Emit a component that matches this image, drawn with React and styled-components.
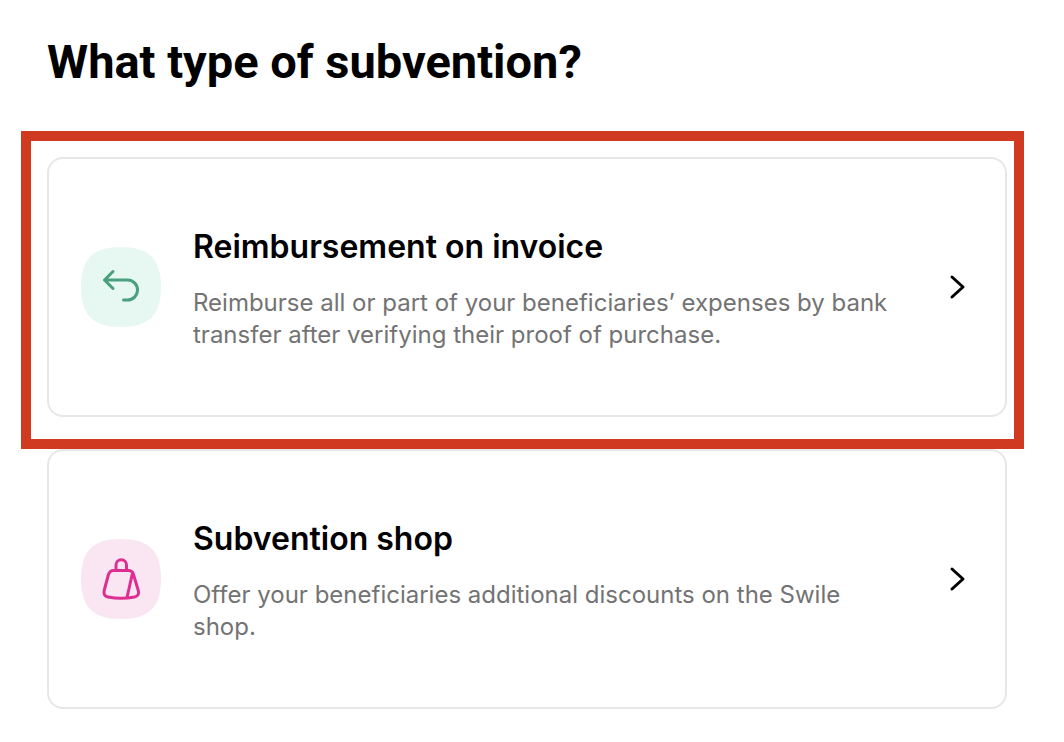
import React from "react";
import styled, { createGlobalStyle } from "styled-components";

const GlobalStyle = createGlobalStyle`
  * {
    box-sizing: border-box;
  }
  body {
    margin: 0;
    background-color: #ffffff;
    font-family: Inter, "Liberation Sans", sans-serif;
  }
`;
const Container = styled.main`
  padding: 32px 57px 32px 47px;
`;
const Title = styled.h1`
  margin: 0 0 65px;
  font-family: Roboto, "Liberation Sans", sans-serif;
  font-size: 47px;
  font-weight: 700;
  line-height: 60px;
  color: #000000;
`;
const List = styled.div`
  display: flex;
  flex-direction: column;
  gap: 32px;
`;
const Item = styled.div`
  position: relative;
`;
const Highlight = styled.div`
  position: absolute;
  top: -26px;
  right: -17px;
  bottom: -32px;
  left: -26px;
  border: 10px solid #d03a20;
  pointer-events: none;
`;
const Card = styled.button`
  display: flex;
  align-items: center;
  width: 100%;
  min-height: 260px;
  padding: 32px;
  border: 2px solid #e7e7e7;
  border-radius: 16px;
  background-color: #ffffff;
  color: #000000;
  font-family: inherit;
  text-align: left;
  cursor: pointer;
`;
const Icon = styled.svg`
  flex: none;
  width: 80px;
  height: 80px;
  fill: none;
  stroke: ${(props) => props.$color};
  stroke-width: 3;
  stroke-linecap: round;
  stroke-linejoin: round;
`;
const Badge = styled.path`
  fill: ${(props) => props.$fill};
  stroke: none;
`;
const Info = styled.span`
  flex: 1;
  display: flex;
  flex-direction: column;
  gap: 16px;
  margin: 0 48px 0 32px;
`;
const Name = styled.span`
  font-size: 32px;
  font-weight: 600;
  line-height: 48px;
`;
const Description = styled.span`
  font-size: 24px;
  font-weight: 400;
  line-height: 32px;
  color: #737373;
`;
const Chevron = styled.svg`
  flex: none;
  width: 32px;
  height: 32px;
  fill: none;
  stroke: #000000;
  stroke-width: 3;
  stroke-linecap: round;
  stroke-linejoin: round;
`;

const subventions = [
  {
    id: "invoice",
    title: "Reimbursement on invoice",
    desc: "Reimburse all or part of your beneficiaries’ expenses by bank transfer after verifying their proof of purchase.",
    color: "#4a9f7f",
    fill: "#e7f8f2",
    shape: <path d="M32 24.5L23.5 33L32 41.5M23.5 33H46.5A10 10 0 0 1 46.5 53H42.5" />,
    highlighted: true,
  },
  {
    id: "shop",
    title: "Subvention shop",
    desc: "Offer your beneficiaries additional discounts on the Swile shop.",
    color: "#dd2f91",
    fill: "#f9e6f2",
    shape: (
      <>
        <path d="M35 31V26A5.25 5.25 0 0 1 45.5 26V31" />
        <path d="M32.5 31.5H47.5C50 31.5 51.5 32.5 52.3 35L57.3 51.5C58.3 55 57 57.3 53.5 58C45 59.5 35 59.5 27 58C23.5 57.3 22.5 55 23.2 51.5L27.3 36C28.2 33 29.5 31.5 32.5 31.5Z" />
        <path d="M51.5 34L46 58.5" />
      </>
    ),
  },
];

const SubventionItem = ({ item }) => {
  return (
    <Item>
      <Card type="button">
        <Icon viewBox="0 0 80 80" $color={item.color} aria-hidden="true">
          <Badge
            $fill={item.fill}
            d="M0 40C0 12 12 0 40 0S80 12 80 40S68 80 40 80S0 68 0 40Z"
          />
          {item.shape}
        </Icon>
        <Info>
          <Name>{item.title}</Name>
          <Description>{item.desc}</Description>
        </Info>
        <Chevron viewBox="0 0 32 32" aria-hidden="true">
          <path d="M11 6L22 16L11 26" />
        </Chevron>
      </Card>
      {item.highlighted && <Highlight />}
    </Item>
  );
};

const App = () => {
  return (
    <Container>
      <GlobalStyle />
      <Title>What type of subvention?</Title>
      <List>
        {subventions.map((item) => (
          <SubventionItem item={item} key={item.id} />
        ))}
      </List>
    </Container>
  );
};

export default App;
